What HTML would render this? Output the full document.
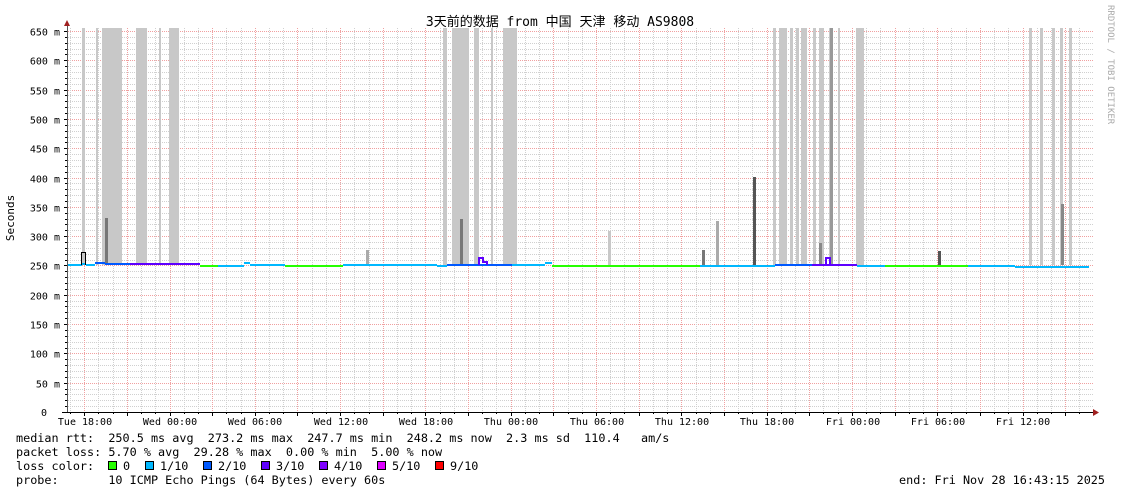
<!DOCTYPE html>
<html><head><meta charset="utf-8"><style>
html,body{margin:0;padding:0;background:#fff;width:1121px;height:494px;overflow:hidden}
svg{display:block}
text{font-family:"DejaVu Sans Mono","Liberation Mono","Noto Sans CJK SC",monospace;font-size:11.8px;fill:#000}
.ax{font-size:10px}
line,rect,path{shape-rendering:crispEdges}
</style></head><body>
<svg id="g" width="1121" height="494" xmlns="http://www.w3.org/2000/svg">
<g id="grid"></g>
<g id="bars" fill="#c8c8c8"></g>
<g id="data"></g>
<line x1="67.5" y1="24" x2="67.5" y2="412" stroke="#555" stroke-width="1"/>
<line x1="62" y1="412.5" x2="1094" y2="412.5" stroke="#000" stroke-width="1"/>
<polygon points="64,26 70,26 67,20" fill="#a02020"/>
<polygon points="1093,409 1093,416 1099,412.5" fill="#a02020"/>
<text x="560" y="26" text-anchor="middle" style="font-size:13px;font-family:'DejaVu Sans Mono','Noto Sans CJK SC',monospace">3天前的数据 from 中国 天津 移动 AS9808</text>
<text class="ax" transform="translate(14,218) rotate(-90)" text-anchor="middle" style="font-size:11px">Seconds</text>
<text transform="translate(1108,5) rotate(90)" style="font-size:9px;fill:#aaa">RRDTOOL / TOBI OETIKER</text>
<g id="ylab" text-anchor="end"></g>
<g text-anchor="middle" class="ax">
<text class="ax" x="85" y="425">Tue 18:00</text><text class="ax" x="170" y="425">Wed 00:00</text><text class="ax" x="255" y="425">Wed 06:00</text><text class="ax" x="341" y="425">Wed 12:00</text><text class="ax" x="426" y="425">Wed 18:00</text><text class="ax" x="511" y="425">Thu 00:00</text><text class="ax" x="597" y="425">Thu 06:00</text><text class="ax" x="682" y="425">Thu 12:00</text><text class="ax" x="767" y="425">Thu 18:00</text><text class="ax" x="853" y="425">Fri 00:00</text><text class="ax" x="938" y="425">Fri 06:00</text><text class="ax" x="1023" y="425">Fri 12:00</text>
</g>
<text x="16" y="442" xml:space="preserve">median rtt:  250.5 ms avg  273.2 ms max  247.7 ms min  248.2 ms now  2.3 ms sd  110.4   am/s</text>
<text x="16" y="456" xml:space="preserve">packet loss: 5.70 % avg  29.28 % max  0.00 % min  5.00 % now</text>
<text x="16" y="470" xml:space="preserve">loss color:</text>
<g stroke="#000" stroke-width="1">
<rect x="108.5" y="461.5" width="8" height="8" fill="#26ff00"/>
<rect x="145.5" y="461.5" width="8" height="8" fill="#00b8ff"/>
<rect x="203.5" y="461.5" width="8" height="8" fill="#0059ff"/>
<rect x="261.5" y="461.5" width="8" height="8" fill="#5e00ff"/>
<rect x="319.5" y="461.5" width="8" height="8" fill="#7e00ff"/>
<rect x="377.5" y="461.5" width="8" height="8" fill="#dd00ff"/>
<rect x="435.5" y="461.5" width="8" height="8" fill="#ff0000"/>
</g>
<text x="123" y="470">0</text><text x="160" y="470">1/10</text><text x="218" y="470">2/10</text><text x="276" y="470">3/10</text><text x="334" y="470">4/10</text><text x="392" y="470">5/10</text><text x="450" y="470">9/10</text>
<text x="16" y="484" xml:space="preserve">probe:       10 ICMP Echo Pings (64 Bytes) every 60s</text>
<text x="1105" y="484" text-anchor="end">end: Fri Nov 28 16:43:15 2025</text>
</svg>
<script>
var NS="http://www.w3.org/2000/svg";
function el(p,t,a){var e=document.createElementNS(NS,t);for(var k in a)e.setAttribute(k,a[k]);document.getElementById(p).appendChild(e);return e;}
var y0=412,k=381/650;
for(var v=10;v<=650;v+=10){var y=Math.round(y0-v*k)+0.5;var maj=v%50==0;
el("grid","line",{x1:68,x2:1093,y1:y,y2:y,stroke:maj?"#f0a0a0":"#d0d0d0","stroke-dasharray":"1,1"});
el("grid","line",{x1:maj?64:65,x2:67,y1:y,y2:y,stroke:"#000"});
if(maj){var t=el("ylab","text",{x:60,y:y+4,"class":"ax"});t.textContent=v+" m";}}
var t0=el("ylab","text",{x:47,y:416,"class":"ax"});t0.textContent="0";
var hr=85.3/6;
for(var i=-1;i<80;i++){var x=Math.floor(84.7+i*hr)+0.5;if(x<68||x>1093)continue;var maj=((i%3)+3)%3==0;
el("grid","line",{x1:x,x2:x,y1:28,y2:412,stroke:maj?"#f0a0a0":"#d0d0d0","stroke-dasharray":"1,1"});
el("grid","line",{x1:x,x2:x,y1:412,y2:maj?416:414,stroke:"#000"});}
var bars=[[82,85],[96,98],[102,122],[136,147],[159,161],[169,179],[443,447],[452,469],[474,479],[491,493],[503,517],[773,776],[779,787],[790,793],[796,799],[801,807],[813,816],[819,824],[829,833],[838,840],[856,864],[1029,1032],[1040,1043],[1052,1055],[1060,1063],[1069,1072]];
bars.forEach(function(b){el("bars","rect",{x:b[0],y:28,width:b[1]-b[0],height:237});});
el("bars","rect",{x:608,y:231,width:3,height:34});
var spikes=[[105,218,"#777"],[366,250,"#aaa"],[460,219,"#777"],[702,250,"#777"],[716,221,"#aaa"],[753,177,"#555"],[819,243,"#888"],[830,28,"#999"],[938,251,"#555"],[1061,204,"#888"]];
spikes.forEach(function(s){el("bars","rect",{x:s[0],y:s[1],width:3,height:265-s[1],fill:s[2]});});
var segs=[[67,82,265,"#00b8ff"],[82,86,264,"#00b8ff"],[86,95,265,"#00b8ff"],[95,105,263,"#0059ff"],[105,130,264,"#0059ff"],[130,200,264,"#5e00ff"],[200,218,266,"#26ff00"],[218,244,266,"#00b8ff"],[244,250,263,"#00b8ff"],[250,285,265,"#00b8ff"],[285,343,266,"#26ff00"],[343,437,265,"#00b8ff"],[437,447,266,"#00b8ff"],[447,480,265,"#0059ff"],[480,512,265,"#0059ff"],[512,545,265,"#00b8ff"],[545,552,263,"#00b8ff"],[552,700,266,"#26ff00"],[700,775,266,"#00b8ff"],[775,812,265,"#0059ff"],[812,857,265,"#5e00ff"],[857,885,266,"#00b8ff"],[885,968,266,"#26ff00"],[968,1015,266,"#00b8ff"],[1015,1089,267,"#00b8ff"]];
segs.forEach(function(s){el("data","rect",{x:s[0],y:s[2]-1,width:s[1]-s[0],height:2,fill:s[3]});});
el("data","path",{d:"M81.5,265 V252.5 H85.5 V265",fill:"none",stroke:"#000","stroke-width":1});
el("data","path",{d:"M479,265 V258 H483 V262 H487 V265",fill:"none",stroke:"#5e00ff","stroke-width":2});
el("data","path",{d:"M826,265 V258 H830 V265",fill:"none",stroke:"#5e00ff","stroke-width":2});
</script>
</body></html>
